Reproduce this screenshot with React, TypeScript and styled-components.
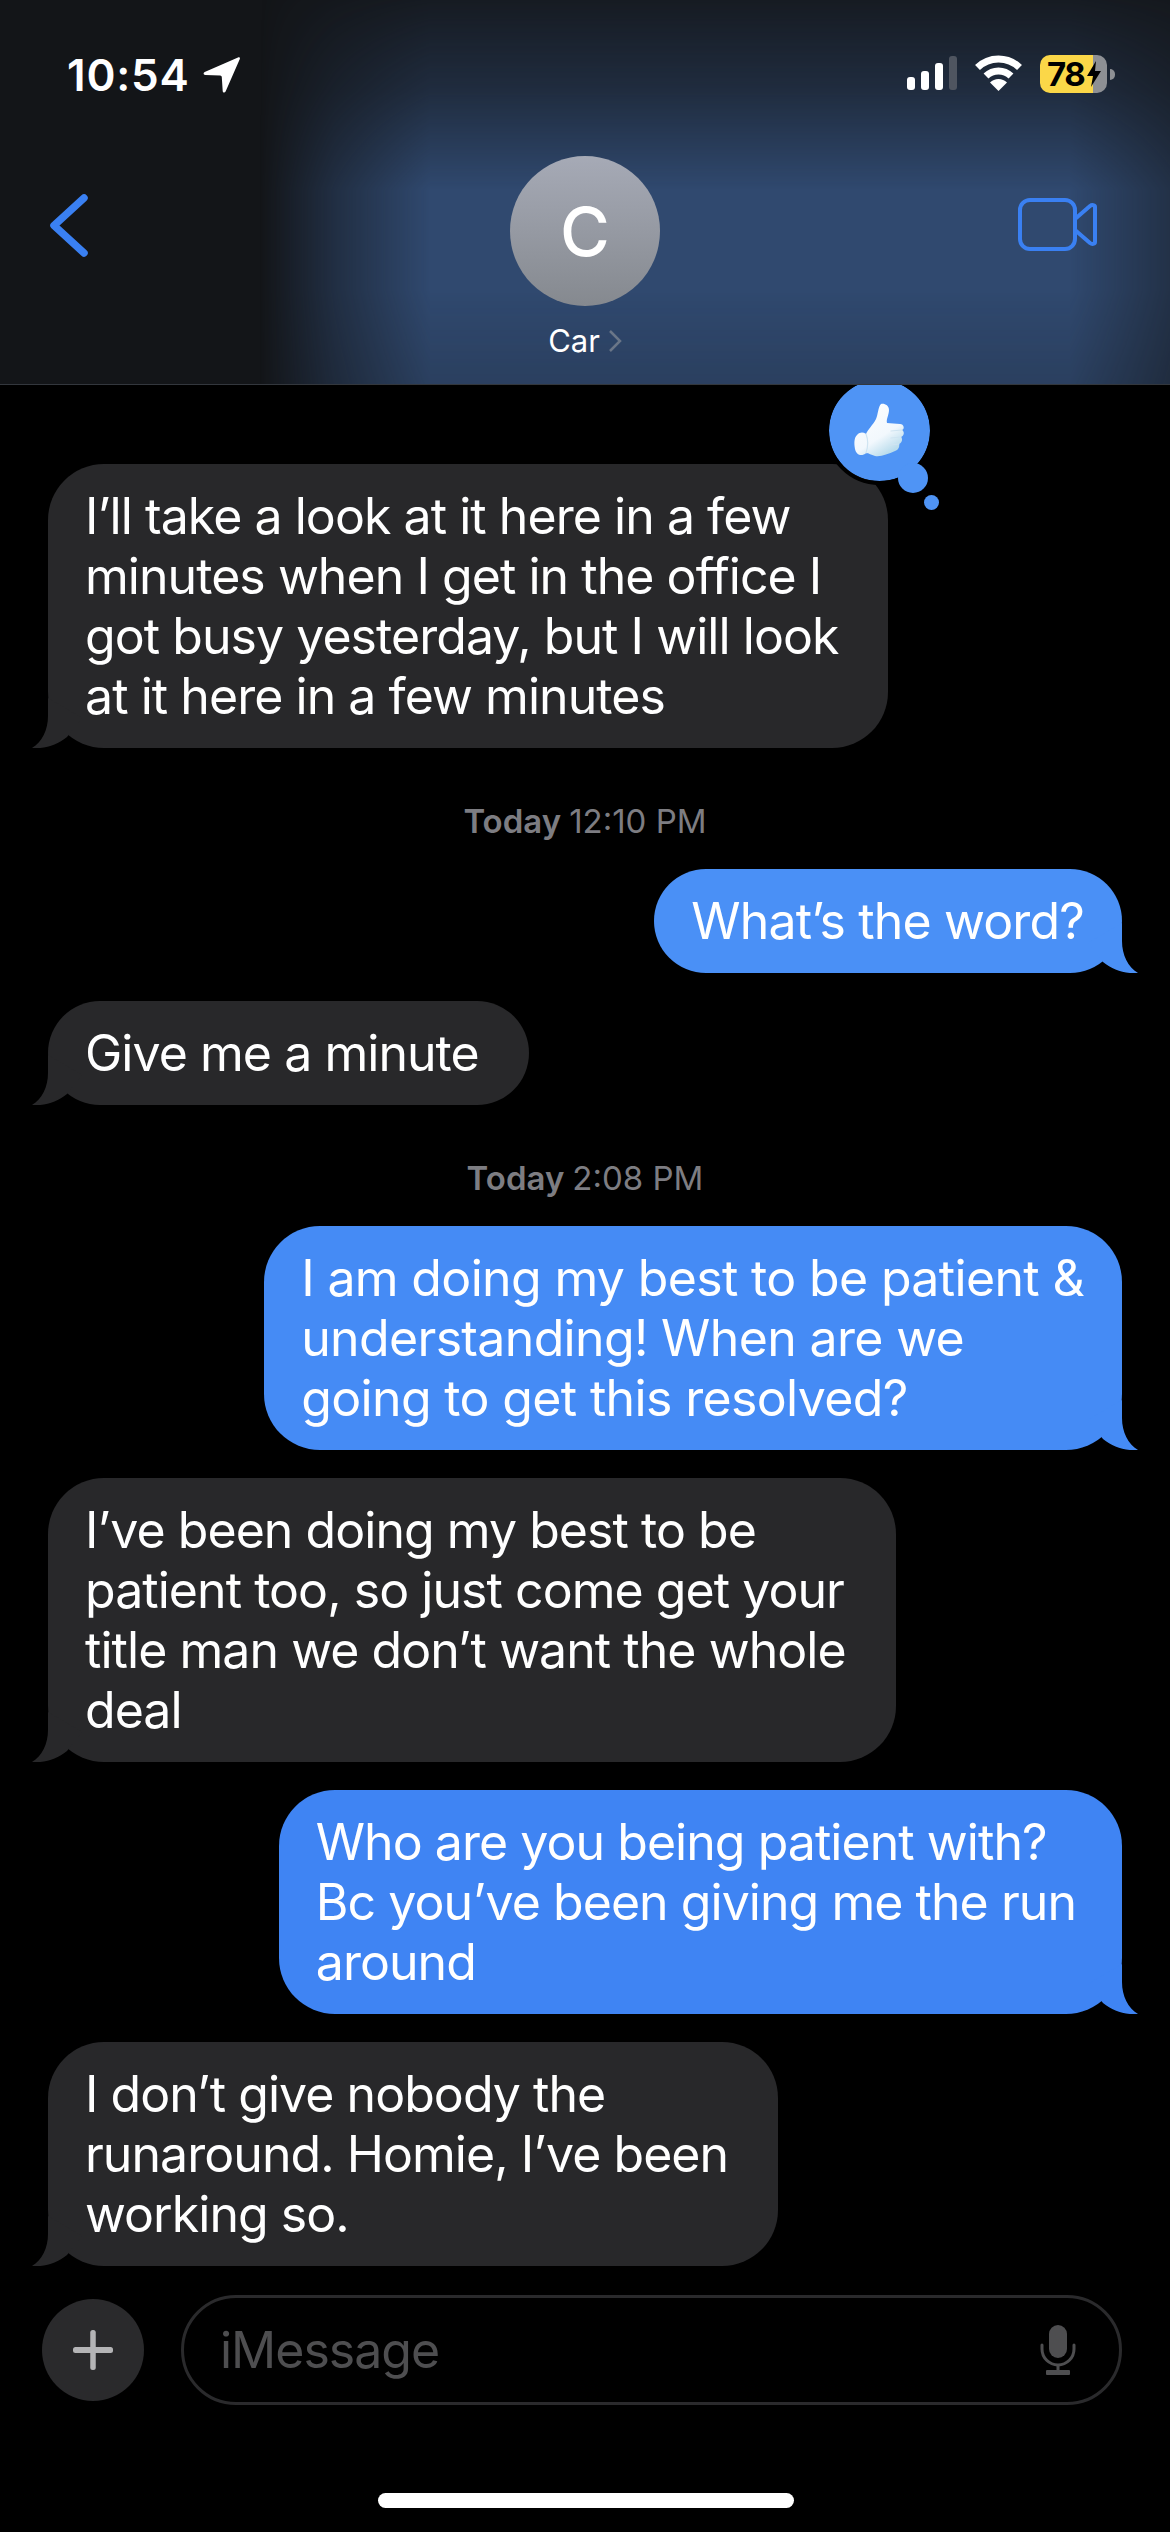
import React from 'react';
import styled, { createGlobalStyle } from 'styled-components';

type Message = {
  id: number;
  from?: 'me' | 'them';
  lines?: string[];
  day?: string;
  time?: string;
  tapback?: boolean;
  tint?: string;
  tracking?: number;
  padRight?: number;
};

const messages: Message[] = [
  { id: 1, from: 'them', tapback: true, lines: ['I’ll take a look at it here in a few', 'minutes when I get in the office I', 'got busy yesterday, but I will look', 'at it here in a few minutes'] },
  { id: 2, day: 'Today', time: '12:10 PM' },
  { id: 3, from: 'me', tint: '#4a90f6', tracking: -0.85, lines: ['What’s the word?'] },
  { id: 4, from: 'them', lines: ['Give me a minute'] },
  { id: 5, day: 'Today', time: '2:08 PM' },
  { id: 6, from: 'me', tint: '#458bf5', tracking: -0.65, lines: ['I am doing my best to be patient &', 'understanding! When are we', 'going to get this resolved?'] },
  { id: 7, from: 'them', lines: ['I’ve been doing my best to be', 'patient too, so just come get your', 'title man we don’t want the whole', 'deal'] },
  { id: 8, from: 'me', tint: '#3f84f3', padRight: 46, lines: ['Who are you being patient with?', 'Bc you’ve been giving me the run', 'around'] },
  { id: 9, from: 'them', lines: ['I don’t give nobody the', 'runaround. Homie, I’ve been', 'working so.'] },
];

const Global = createGlobalStyle`
  html, body { margin: 0; padding: 0; background: #000; }
  * { box-sizing: border-box; }
`;

const Page = styled.div`
  position: relative;
  width: 1170px;
  height: 2532px;
  display: flex;
  flex-direction: column;
  overflow: hidden;
  background: #000;
  color: #fff;
  font-family: Inter, "Liberation Sans", sans-serif;
`;

const Header = styled.header`
  position: relative;
  z-index: 2;
  height: 385px;
  flex: none;
  padding-top: 55px;
  background: #131518;
  border-bottom: 1px solid #33373d;
  &::before {
    content: '';
    position: absolute;
    inset: 0;
    z-index: -1;
    background: #30496f;
    mask-image:
      linear-gradient(to right, transparent 260px, rgba(0, 0, 0, 0.5) 335px, #000 430px, #000 1070px, rgba(0, 0, 0, 0.55) 1170px),
      linear-gradient(to bottom, rgba(0, 0, 0, 0.12) 0, rgba(0, 0, 0, 0.45) 90px, #000 190px, #000 290px, rgba(0, 0, 0, 0.82) 385px);
    mask-composite: intersect;
  }
`;

const StatusBar = styled.div`
  display: flex;
  align-items: flex-start;
  justify-content: space-between;
  height: 40px;
  padding: 0 63px 0 67px;
`;

const Clock = styled.div`
  display: flex;
  align-items: center;
  gap: 13px;
  font-size: 44px;
  line-height: 40px;
  font-weight: 600;
  letter-spacing: 0.8px;
`;

const StatusIcons = styled.div`
  display: flex;
  align-items: flex-start;
  gap: 17px;
`;

const Signal = styled.div`
  display: flex;
  align-items: flex-end;
  gap: 5.5px;
  height: 35px;
`;

const SignalBar = styled.span<{ $height: number; $off?: boolean }>`
  width: 8.5px;
  height: ${p => p.$height}px;
  border-radius: 3px;
  background: ${p => (p.$off ? '#4f5560' : '#fff')};
`;

const Battery = styled.div`
  position: relative;
  width: 67px;
  height: 38px;
  display: flex;
  align-items: center;
  padding-left: 7px;
  border-radius: 10px;
  background: linear-gradient(90deg, #fbd748 0, #fbd748 53px, #8e9094 53px);
  color: #000;
  font-size: 33px;
  font-weight: 700;
  letter-spacing: -1.5px;
  &::after {
    content: '';
    position: absolute;
    right: -8px;
    top: 14px;
    width: 5px;
    height: 11px;
    border-radius: 0 6px 6px 0;
    background: #8e9094;
  }
`;

const Nav = styled.div`
  display: grid;
  grid-template-columns: 1fr auto 1fr;
  align-items: start;
  margin-top: 99px;
  padding: 0 50px;
`;

const BackIcon = styled.svg`
  width: 38px;
  height: 63px;
`;

const Contact = styled.div`
  display: flex;
  flex-direction: column;
  align-items: center;
  margin-top: -38px;
`;

const Avatar = styled.div`
  width: 150px;
  height: 150px;
  border-radius: 50%;
  display: flex;
  align-items: center;
  justify-content: center;
  background: linear-gradient(180deg, #a6aab6, #85898f);
  font-size: 68px;
  font-weight: 500;
`;

const ContactName = styled.div`
  display: flex;
  align-items: center;
  gap: 8px;
  margin-top: 17px;
  font-size: 31px;
  line-height: 36px;
`;

const VideoIcon = styled.svg`
  width: 79px;
  height: 53px;
  margin: 4px 23px 0 0;
  justify-self: end;
`;

const Thread = styled.main`
  flex: 1;
  display: flex;
  flex-direction: column;
  gap: 28px;
  padding: 79px 48px 0;
`;

const Timestamp = styled.div`
  margin-top: 25px;
  height: 40px;
  display: flex;
  align-items: center;
  justify-content: center;
  gap: 8px;
  font-size: 33px;
  color: #7d7d82;
  b { font-weight: 600; }
`;

const Bubble = styled.div<{ $tint?: string; $tracking?: number; $padRight?: number }>`
  position: relative;
  width: fit-content;
  align-self: ${p => (p.$tint ? 'flex-end' : 'flex-start')};
  padding: 22px ${p => p.$padRight ?? (p.$tint ? 38 : 50)}px 22px 37px;
  border-radius: 56px;
  background: ${p => p.$tint || '#28282a'};
  font-size: 50px;
  line-height: 60px;
  letter-spacing: ${p => p.$tracking ?? -0.95}px;
  white-space: nowrap;
`;

const Tail = styled.svg<{ $tint?: string }>`
  position: absolute;
  bottom: 0;
  width: 60px;
  height: 50px;
  ${p => (p.$tint ? 'right: -16px; transform: scaleX(-1);' : 'left: -16px;')}
  fill: ${p => p.$tint || '#28282a'};
`;

const Tapback = styled.div`
  position: absolute;
  left: 777px;
  top: -88px;
  width: 109px;
  height: 109px;
  border-radius: 50%;
  display: flex;
  align-items: center;
  justify-content: center;
  background: #4f94f5;
  border: 4px solid #000;
  background-clip: padding-box;
`;

const TapbackDot = styled.span<{ $size: number; $x: number; $y: number }>`
  position: absolute;
  left: ${p => p.$x}px;
  top: ${p => p.$y}px;
  width: ${p => p.$size}px;
  height: ${p => p.$size}px;
  border-radius: 50%;
  background: #4f94f5;
`;

const Composer = styled.div`
  flex: none;
  display: flex;
  align-items: center;
  gap: 37px;
  height: 110px;
  padding: 0 48px 0 42px;
  margin-bottom: 127px;
`;

const AddButton = styled.div`
  width: 102px;
  height: 102px;
  flex: none;
  border-radius: 50%;
  display: flex;
  align-items: center;
  justify-content: center;
  background: #2a2a2c;
`;

const Field = styled.div`
  flex: 1;
  height: 110px;
  display: flex;
  align-items: center;
  justify-content: space-between;
  padding: 0 43px 0 36px;
  border: 3px solid #2a2a2c;
  border-radius: 55px;
  font-size: 50px;
  letter-spacing: -1px;
  color: #4e4e50;
`;

const HomeBar = styled.div`
  position: absolute;
  left: 378px;
  top: 2493px;
  width: 416px;
  height: 15px;
  border-radius: 8px;
  background: #fff;
`;

export default function App() {
  return (
    <Page>
      <Global />
      <Header>
        <StatusBar>
          <Clock>
            10:54
            <svg width="37" height="36" viewBox="0 0 37 36" fill="#fff">
              <path d="M35 0.5 C36.5 0 37.3 0.8 36.7 2.3 L22.6 34.5 C21.8 36.2 19.8 35.9 19.7 34 L18.8 20.3 C18.7 19.2 18.2 18.7 17.1 18.6 L2.3 18 C0.3 17.9 0 15.8 1.7 15 Z" />
            </svg>
          </Clock>
          <StatusIcons>
            <Signal>
              <SignalBar $height={13} />
              <SignalBar $height={19} />
              <SignalBar $height={27} />
              <SignalBar $height={34} $off />
            </Signal>
            <svg width="49" height="36" viewBox="0 0 49 36">
              <g fill="none" stroke="#fff" strokeWidth="7">
                <path d="M3.5 12.5 A30 30 0 0 1 45.5 12.5" />
                <path d="M12 21 A18 18 0 0 1 37 21" />
              </g>
              <path d="M24.5 36 L16 27.5 A12 12 0 0 1 33 27.5 Z" fill="#fff" />
            </svg>
            <Battery>
              78
              <svg width="14" height="26" viewBox="0 0 14 26" fill="#000" style={{ marginLeft: 3 }}>
                <path d="M9 0 L0 15 H6 L4 26 L14 10 H8 Z" />
              </svg>
            </Battery>
          </StatusIcons>
        </StatusBar>
        <Nav>
          <BackIcon viewBox="0 0 38 63" fill="none" stroke="#3a80f2" strokeWidth="7.5" strokeLinecap="round" strokeLinejoin="round">
            <path d="M34 4 L4 31.5 L34 59" />
          </BackIcon>
          <Contact>
            <Avatar>C</Avatar>
            <ContactName>
              Car
              <svg width="14" height="24" viewBox="0 0 14 24" fill="none" stroke="#6a7688" strokeWidth="2.5">
                <path d="M2 2 L12 12 L2 22" />
              </svg>
            </ContactName>
          </Contact>
          <VideoIcon viewBox="0 0 79 53" fill="none" stroke="#3a80f2" strokeWidth="4" strokeLinejoin="round">
            <rect x="2" y="2" width="55" height="49" rx="10" />
            <path d="M57 21 L72 8 C74 6.5 77 7 77 9 V44 C77 46 74 46.5 72 45 L57 32" />
          </VideoIcon>
        </Nav>
      </Header>
      <Thread>
        {messages.map(m =>
          m.lines ? (
            <Bubble key={m.id} $tint={m.tint} $tracking={m.tracking} $padRight={m.padRight}>
              {m.lines.map((line, i) => (
                <div key={i}>{line}</div>
              ))}
              <Tail $tint={m.tint} viewBox="0 0 60 50">
                <path d="M16 0 L16 18 C16 32 10 44 0 50 C14 51 25 47 35 39 L50 20 Z" />
              </Tail>
              {m.tapback && (
                <>
                  <Tapback>
                    <svg width="52" height="56" viewBox="0 0 52 56">
                      <defs>
                        <linearGradient id="thumb" x1="0" y1="0" x2="0.6" y2="1">
                          <stop offset="0" stopColor="#ffffff" />
                          <stop offset="0.7" stopColor="#f2f8fd" />
                          <stop offset="1" stopColor="#b9dcec" />
                        </linearGradient>
                      </defs>
                      <path
                        fill="url(#thumb)"
                        d="M27 1 C30 0 35 2 35 7 C35 12 32 16 33 20 L46 21 C50 21 51 26 48 27 C51 29 50 33 47 34 C49 36 48 40 45 41 C46 44 44 47 41 48 C34 51 27 54 21 53 C17 52 15 50 12 50 C8 54 2 52 1 46 C0 40 0 35 3 32 C6 29 9 29 12 31 C14 26 19 22 22 16 C24 12 24 4 27 1 Z"
                      />
                      <g fill="none" stroke="#cfe4f1" strokeWidth="1.2" strokeLinecap="round">
                        <path d="M37 28 L48 27" />
                        <path d="M37 35 L47 34" />
                        <path d="M36 42 L45 41" />
                        <path d="M12 31 C14 36 14 44 12 50" />
                      </g>
                    </svg>
                  </Tapback>
                  <TapbackDot $size={30} $x={850} $y={-1} />
                  <TapbackDot $size={15} $x={876} $y={31} />
                </>
              )}
            </Bubble>
          ) : (
            <Timestamp key={m.id}>
              <b>{m.day}</b> {m.time}
            </Timestamp>
          )
        )}
      </Thread>
      <Composer>
        <AddButton>
          <svg width="40" height="40" viewBox="0 0 40 40" fill="#b4b4b6">
            <rect x="17.25" y="0" width="5.5" height="40" rx="2.5" />
            <rect x="0" y="17" width="40" height="6" rx="2.5" />
          </svg>
        </AddButton>
        <Field>
          iMessage
          <svg width="36" height="50" viewBox="0 0 36 50">
            <rect x="9" y="0" width="18" height="33" rx="9" fill="#4e4e50" />
            <path d="M2 20 V24 A16 16 0 0 0 34 24 V20" fill="none" stroke="#4e4e50" strokeWidth="3" strokeLinecap="round" />
            <rect x="16.5" y="40" width="3" height="6" fill="#4e4e50" />
            <rect x="6" y="45" width="24" height="5" rx="1" fill="#4e4e50" />
          </svg>
        </Field>
      </Composer>
      <HomeBar />
    </Page>
  );
}
